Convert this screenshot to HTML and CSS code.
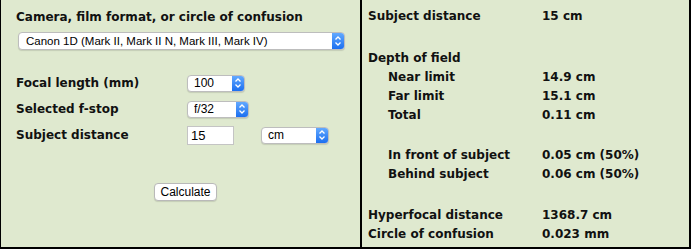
FILE: index.html
```html
<!DOCTYPE html>
<html lang="en">
<head>
    <meta charset="UTF-8">
    <title>Depth of field calculator</title>
    <link rel="stylesheet" href="styles.css">
</head>
<body>
    <div class="calc">
        <form class="inputs">
            <div class="title">Camera, film format, or circle of confusion</div>
            <div class="picker picker-camera">
                <select>
                    <option>Canon 1D (Mark II, Mark II N, Mark III, Mark IV)</option>
                </select>
                <span class="stepper"><svg width="8" height="12" viewBox="0 0 8 12"><path d="M1.5 4.5 L4 2 L6.5 4.5 M1.5 7.5 L4 10 L6.5 7.5" fill="none" stroke="#fff" stroke-width="1.3"/></svg></span>
            </div>

            <div class="rows">
                <div class="row">
                    <span class="label">Focal length (mm)</span>
                    <div class="picker picker-focal">
                        <select><option>100</option></select>
                        <span class="stepper"><svg width="8" height="12" viewBox="0 0 8 12"><path d="M1.5 4.5 L4 2 L6.5 4.5 M1.5 7.5 L4 10 L6.5 7.5" fill="none" stroke="#fff" stroke-width="1.3"/></svg></span>
                    </div>
                </div>
                <div class="row">
                    <span class="label">Selected f-stop</span>
                    <div class="picker picker-stop">
                        <select><option>f/32</option></select>
                        <span class="stepper"><svg width="8" height="12" viewBox="0 0 8 12"><path d="M1.5 4.5 L4 2 L6.5 4.5 M1.5 7.5 L4 10 L6.5 7.5" fill="none" stroke="#fff" stroke-width="1.3"/></svg></span>
                    </div>
                </div>
                <div class="row">
                    <span class="label">Subject distance</span>
                    <input class="distance" type="text" value="15">
                    <div class="picker picker-unit">
                        <select><option>cm</option></select>
                        <span class="stepper"><svg width="8" height="12" viewBox="0 0 8 12"><path d="M1.5 4.5 L4 2 L6.5 4.5 M1.5 7.5 L4 10 L6.5 7.5" fill="none" stroke="#fff" stroke-width="1.3"/></svg></span>
                    </div>
                </div>
            </div>

            <div class="actions">
                <button type="button" class="btn">Calculate</button>
            </div>
        </form>

        <div class="results">
            <div class="line"><span class="key">Subject distance</span><span>15 cm</span></div>

            <div class="line gap-top"><span class="key">Depth of field</span><span></span></div>
            <div class="line"><span class="key sub">Near limit</span><span>14.9 cm</span></div>
            <div class="line"><span class="key sub">Far limit</span><span>15.1 cm</span></div>
            <div class="line"><span class="key sub">Total</span><span>0.11 cm</span></div>

            <div class="line gap"><span class="key sub">In front of subject</span><span>0.05 cm (50%)</span></div>
            <div class="line"><span class="key sub">Behind subject</span><span>0.06 cm (50%)</span></div>

            <div class="line gap-lg"><span class="key">Hyperfocal distance</span><span>1368.7 cm</span></div>
            <div class="line"><span class="key">Circle of confusion</span><span>0.023 mm</span></div>
        </div>
    </div>
</body>
</html>
```

FILE: styles.css
```css
:root {
    --panel: #dfe9cf;
    --ink: #111;
    --blue-top: #62a9ff;
    --blue-bottom: #1c6ff0;
}

* {
    box-sizing: border-box;
}

body {
    margin: 0;
    background: var(--panel);
    font-family: 'DejaVu Sans', Verdana, sans-serif;
    font-size: 12px;
    font-weight: bold;
    color: var(--ink);
}

.calc {
    display: flex;
    width: 691px;
    height: 249px;
    background: var(--panel);
    border-left: 1px solid #000;
    border-right: 2px solid #000;
    border-bottom: 2px solid #000;
}

/* left: the form */
.inputs {
    width: 361px;
    margin: 0;
    padding: 8px 0 0 15px;
    border-right: 2px solid #000;
}

.title {
    line-height: 19px;
}

.picker {
    display: inline-flex;
    height: 17px;
    background: #fff;
    border: 1px solid #bdbdbd;
    border-radius: 4px;
    box-shadow: 0 1px 1px rgba(0, 0, 0, 0.12);
    overflow: hidden;
}

.picker select {
    flex: 1;
    min-width: 0;
    -webkit-appearance: none;
    appearance: none;
    border: none;
    background: transparent;
    padding: 0 0 0 6px;
    margin: 0;
    font-family: 'Liberation Sans', Arial, sans-serif;
    font-size: 12px;
    font-weight: normal;
    color: #000;
    line-height: 15px;
    outline: none;
}

.stepper {
    width: 12px;
    display: flex;
    align-items: center;
    justify-content: center;
    background: linear-gradient(var(--blue-top), var(--blue-bottom));
}

.picker-camera {
    display: flex;
    width: 327px;
    margin: 5px 0 0 2px;
    height: 18px;
}

.picker-camera select {
    padding-left: 7px;
    font-size: 11.5px;
}

.picker-focal {
    width: 58px;
}

.picker-stop {
    width: 62px;
}

.picker-unit {
    width: 68px;
    margin-left: 27px;
}

.rows {
    margin-top: 20px;
}

.row {
    display: flex;
    align-items: center;
    height: 26px;
}

.label {
    width: 171px;
    flex: none;
}

.distance {
    width: 47px;
    height: 19px;
    margin: 0;
    padding: 0 3px;
    border: 1px solid #c4c4c4;
    background: #fff;
    font-family: 'Liberation Sans', Arial, sans-serif;
    font-size: 13px;
    font-weight: normal;
    color: #000;
    outline: none;
}

.actions {
    margin-top: 35px;
    padding-left: 138px;
}

.btn {
    width: 63px;
    height: 18px;
    padding: 0;
    background: #fff;
    border: 1px solid #b9b9b9;
    border-radius: 4px;
    box-shadow: 0 1px 1px rgba(0, 0, 0, 0.12);
    font-family: 'Liberation Sans', Arial, sans-serif;
    font-size: 12px;
    font-weight: normal;
    color: #000;
}

/* right: the results */
.results {
    flex: 1;
    padding: 7px 0 0 6px;
}

.line {
    display: flex;
    line-height: 19px;
}

.key {
    width: 174px;
}

.key.sub {
    padding-left: 20px;
}

.gap-top {
    margin-top: 23px;
}

.gap {
    margin-top: 21px;
}

.gap-lg {
    margin-top: 22px;
}
```
